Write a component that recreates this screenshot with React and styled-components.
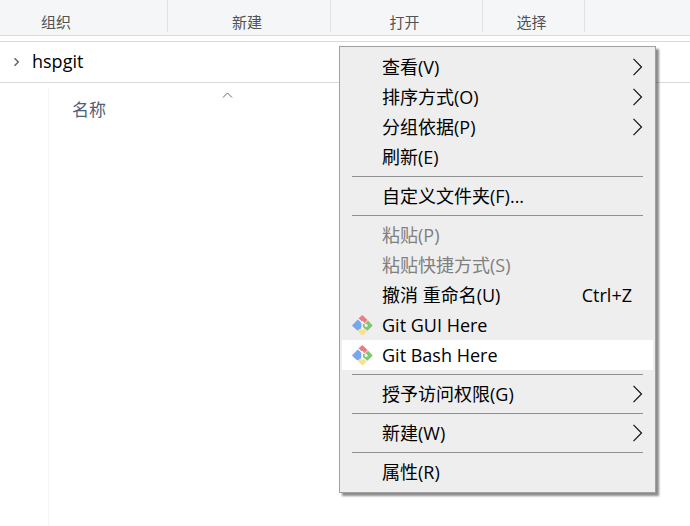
import React from 'react';
import styled, { createGlobalStyle } from 'styled-components';

const GlobalStyle = createGlobalStyle`
    * {
        box-sizing: border-box;
    }
    body {
        margin: 0;
        background: #fff;
        color: #000;
        font-family: "Open Sans", "Noto Sans CJK SC", sans-serif;
    }
    button {
        border: 0;
        padding: 0;
        background: none;
        font-family: inherit;
    }
`;

const Window = styled.div`
    position: relative;
    display: flex;
    flex-direction: column;
    min-height: 100vh;
    overflow: hidden;
`;

const Ribbon = styled.div`
    display: flex;
    height: 36px;
    padding-bottom: 3px;
    background: #f4f6f7;
    border-bottom: 1px solid #dadbdc;
`;

const RibbonGroup = styled.div`
    display: flex;
    align-items: flex-end;
    justify-content: center;
    flex: 0 0 ${(props) => props.$width}px;
    padding-right: ${(props) => props.$end || 0}px;
    border-right: 1px solid #e0e2e4;
    color: #505255;
    font-size: 15px;
    line-height: 20px;
`;

const AddressBar = styled.nav`
    display: flex;
    align-items: center;
    gap: 12px;
    height: 42px;
    margin-top: 5px;
    padding-left: 13px;
    border-top: 1px solid #d9d9d9;
    border-bottom: 1px solid #d9d9d9;
`;

const Crumb = styled.a`
    padding-bottom: 2px;
    color: #000;
    font-size: 18px;
    line-height: 24px;
    text-decoration: none;
`;

const Content = styled.main`
    display: flex;
    flex: 1;
    padding-top: 5px;
`;

const NavPane = styled.aside`
    flex: 0 0 49px;
    border-right: 1px solid #f5f5f5;
`;

const ColumnHeader = styled.button`
    display: flex;
    flex-direction: column;
    align-items: center;
    width: 310px;
    height: 38px;
    margin-left: 23px;
    padding-top: 4px;
    color: #4c607a;
    font-size: 17px;
    line-height: 24px;
`;

const ColumnTitle = styled.span`
    align-self: flex-start;
`;

const Menu = styled.div`
    position: absolute;
    top: 46px;
    left: 339px;
    width: 317px;
    padding: 5px 2px;
    background: #eee;
    border: 1px solid #a0a0a0;
    box-shadow: 3px 3px 2px rgba(0, 0, 0, 0.45);
`;

const Item = styled.button`
    display: flex;
    align-items: center;
    width: 100%;
    height: 30px;
    padding-right: 10px;
    color: ${(props) => (props.disabled ? '#808080' : '#000')};
    background: ${(props) => (props.$active ? '#fff' : 'transparent')};
    font-size: 18px;
    line-height: 24px;
    text-align: left;
    white-space: pre;
`;

const IconSlot = styled.span`
    display: flex;
    flex: 0 0 40px;
    padding-left: 10px;
`;

const Label = styled.span`
    flex: 1;
`;

const Shortcut = styled.span`
    padding-right: 11px;
`;

const Separator = styled.hr`
    height: 1px;
    margin: 4px 10px;
    border: 0;
    background: #919191;
`;

const CrumbArrow = () => (
    <svg width="7" height="10" viewBox="0 0 7 10" fill="none" stroke="#666" strokeWidth="1.5" aria-hidden="true">
        <path d="M1.5 1.2 5.3 5 1.5 8.8" />
    </svg>
);

const SortArrow = () => (
    <svg width="11" height="6" viewBox="0 0 11 6" fill="none" stroke="#666" aria-hidden="true">
        <path d="M1 5.5 5.5 1 10 5.5" />
    </svg>
);

const SubmenuArrow = () => (
    <svg width="11" height="18" viewBox="0 0 11 18" fill="none" stroke="#111" strokeWidth="1.2" aria-hidden="true">
        <path d="M1.5 .8 9.5 9 1.5 17.2" />
    </svg>
);

const GitIcon = () => (
    <svg width="21" height="21" viewBox="0 0 21 21" aria-hidden="true">
        <path d="M9.7 .5Q10.3 0 10.9 .5L15.6 5.1 12.3 8.4 6.4 3.6Z" fill="#ec7d84" />
        <path d="M5.8 4.4 9.4 7.6V13.6L5.2 15.6.4 10.9Q0 10.4.4 9.9Z" fill="#78a6f0" />
        <path d="M16 5.5 20.3 9.9Q20.7 10.4 20.3 10.9L15.4 15.8 10.9 12.2V8.4L12.6 9.2Z" fill="#7dc970" />
        <path d="M10.3 13.2 15 16.2 10.9 20.1Q10.3 20.6 9.7 20.1L5.6 16Z" fill="#fbe185" />
        <path d="M6.2 3.8 9.6 7M10.8 7.2 14 10.2" stroke="#f3f4f5" strokeWidth="1" fill="none" />
        <circle cx="10.2" cy="7.3" r="1.3" fill="#f3f4f5" />
        <circle cx="14.2" cy="10.5" r="1.5" fill="#f3f4f5" />
        <circle cx="10.2" cy="13.4" r="1.4" fill="#f3f4f5" />
    </svg>
);

const groups = [
    { label: '组织', width: 168, end: 55 },
    { label: '新建', width: 163, end: 4 },
    { label: '打开', width: 152, end: 4 },
    { label: '选择', width: 102, end: 4 },
];

const sections = [
    [
        { label: '查看(V)', submenu: true },
        { label: '排序方式(O)', submenu: true },
        { label: '分组依据(P)', submenu: true },
        { label: '刷新(E)' },
    ],
    [{ label: '自定义文件夹(F)...' }],
    [
        { label: '粘贴(P)', disabled: true },
        { label: '粘贴快捷方式(S)', disabled: true },
        { label: '撤消 重命名(U)', shortcut: 'Ctrl+Z' },
        { label: 'Git GUI Here', git: true },
        { label: 'Git Bash Here', git: true, active: true },
    ],
    [{ label: '授予访问权限(G)', submenu: true }],
    [{ label: '新建(W)', submenu: true }],
    [{ label: '属性(R)' }],
];

const MenuItem = ({ item }) => (
    <Item type="button" role="menuitem" disabled={item.disabled} $active={item.active}>
        <IconSlot>{item.git && <GitIcon />}</IconSlot>
        <Label>{item.label}</Label>
        {item.shortcut && <Shortcut>{item.shortcut}</Shortcut>}
        {item.submenu && <SubmenuArrow />}
    </Item>
);

const ContextMenu = () => (
    <Menu role="menu">
        {sections.map((items, i) => (
            <React.Fragment key={i}>
                {i > 0 && <Separator />}
                {items.map((item) => (
                    <MenuItem key={item.label} item={item} />
                ))}
            </React.Fragment>
        ))}
    </Menu>
);

const App = () => (
    <Window>
        <GlobalStyle />
        <Ribbon>
            {groups.map((group) => (
                <RibbonGroup key={group.label} $width={group.width} $end={group.end}>
                    {group.label}
                </RibbonGroup>
            ))}
        </Ribbon>
        <AddressBar>
            <CrumbArrow />
            <Crumb href="#hspgit">hspgit</Crumb>
        </AddressBar>
        <Content>
            <NavPane />
            <ColumnHeader type="button">
                <SortArrow />
                <ColumnTitle>名称</ColumnTitle>
            </ColumnHeader>
        </Content>
        <ContextMenu />
    </Window>
);

export default App;
